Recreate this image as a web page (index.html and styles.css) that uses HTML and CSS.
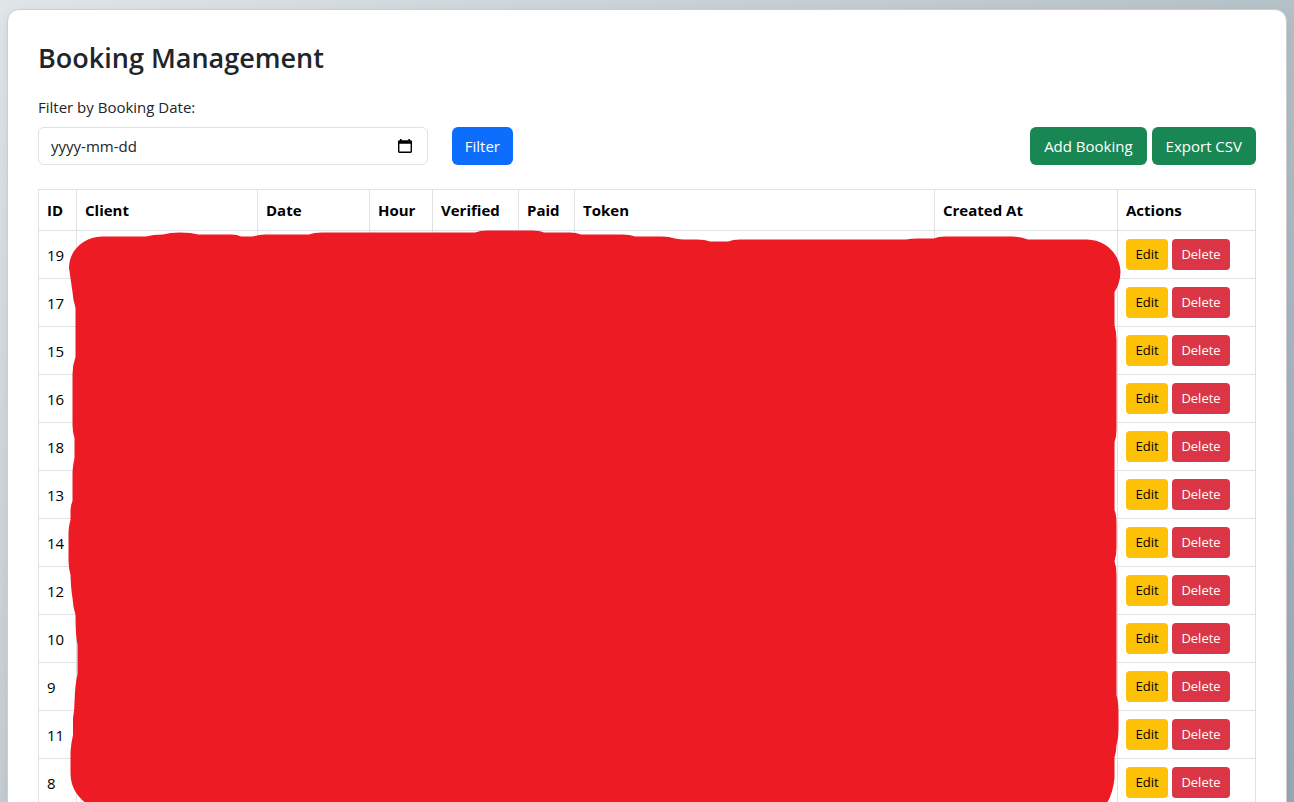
FILE: index.html
```html
<!DOCTYPE html>
<html lang="en">
<head>
<meta charset="utf-8">
<title>Booking Management</title>
<link rel="stylesheet" href="styles.css">
</head>
<body>
<main class="card">
  <h1 class="title">Booking Management</h1>
  <form class="toolbar">
    <div class="field">
      <label for="booking-date">Filter by Booking Date:</label>
      <div class="date-box">
        <input id="booking-date" class="date-input" type="text" placeholder="yyyy-mm-dd">
        <button class="date-picker" type="button" aria-label="Show date picker">
          <svg width="14" height="15" viewBox="0 0 14 15" aria-hidden="true"><path fill="#000" fill-rule="evenodd" d="M2 0h1.6v1.3h6.8V0H12v1.3h.6c.8 0 1.4.6 1.4 1.4v9.900c0 .8-.6 1.400-1.400 1.400H1.400C.6 14 0 13.400 0 12.600V2.700c0-.8.600-1.400 1.400-1.400H2zM1.400 4.700v7.900h11.200V4.700z"/></svg>
        </button>
      </div>
    </div>
    <button class="btn btn-primary" type="submit">Filter</button>
    <div class="toolbar-end">
      <a class="btn btn-success" href="#add">Add Booking</a>
      <a class="btn btn-success" href="#export">Export CSV</a>
    </div>
  </form>
  <div class="table-wrap">
    <table class="table">
      <colgroup><col class="c-id"><col class="c-client"><col class="c-date"><col class="c-hour"><col class="c-verified"><col class="c-paid"><col class="c-token"><col class="c-created"><col class="c-actions"></colgroup>
      <thead>
        <tr><th>ID</th><th>Client</th><th>Date</th><th>Hour</th><th>Verified</th><th>Paid</th><th>Token</th><th>Created At</th><th>Actions</th></tr>
      </thead>
      <tbody id="rows"></tbody>
    </table>
    <svg class="redaction" viewBox="38 189 1218 617" preserveAspectRatio="none" aria-hidden="true">
      <path fill="#ed1c24" d="M69 268C69 250 84 237 102 236.500H146Q153 234.500 163 234.500Q170 232.500 180 232.500Q191 232.500 198 234.500H232Q237 234.700 241 236.500H253Q258 234.500 265 234.500H309Q314 232.500 322 232.500H475Q480 230.500 487 230.500H532Q540 230.700 544 232.500H570Q576 232.700 581 234.500H622Q630 234.700 635 236.500H662Q669 236.700 675 238.500Q680 239.500 684 239.500H697Q705 239.700 710 241.500H728Q733 239.500 740 239.500H906Q911 238.500 918 238.500H934Q938 236.500 945 236.500H1012Q1021 236.700 1028 239.500H1087C1106 240 1120 254 1120.500 272Q1120 284 1114.500 292V325Q1116.500 332 1116.500 340V430Q1116.500 437 1114.500 442V510Q1116.500 515 1116.500 523V548Q1116.500 555 1114.500 561Q1116.500 567 1116.500 575V695Q1118.500 702 1118.500 712V730Q1118.500 738 1116.500 745Q1116 753 1114.500 757V778Q1113 793 1107 803L1103 806H90Q71 794 70.500 774V752Q71 743 73 735V718Q74.500 710 74.500 702Q75 685 77.500 674V645Q75.500 636 75.500 615Q73 607 72.500 598Q71 590 70.500 575Q68.500 568 68.500 560V535Q68.500 526 70.500 520V510Q71 504 72.500 501V472Q73 464 74.500 458V438Q72.500 432 72.500 425V374Q72.500 365 75.500 357V308Q73 300 72.500 292Z"/>
    </svg>
  </div>
</main>
<script src="bookings.js"></script>
</body>
</html>
```
FILE: bookings.js
```js
const ids = [19, 17, 15, 16, 18, 13, 14, 12, 10, 9, 11, 8];
document.getElementById("rows").innerHTML = ids.map(id => `
  <tr>
    <td>${id}</td><td></td><td></td><td></td><td></td><td></td><td></td><td></td>
    <td><div class="actions">
      <a class="btn btn-sm btn-warning" href="#edit-${id}">Edit</a>
      <button class="btn btn-sm btn-danger" type="button">Delete</button>
    </div></td>
  </tr>`).join("");
```
FILE: styles.css
```css
*, *::before, *::after { box-sizing: border-box; }
html { scrollbar-width: none; }
body {
  margin: 0;
  padding: 9px 7px;
  min-height: 100vh;
  font: 15px/24px "Open Sans", "Segoe UI", sans-serif;
  color: #212529;
  background: linear-gradient(135deg, #e0e5e8, #98a7b2);
}
.card {
  padding: 30px;
  background: #fff;
  border: 1px solid #c8ced2;
  border-radius: 12px;
  box-shadow: 0 4px 12px rgba(0, 0, 0, .08);
}
.title { margin: 0 0 20px; font-size: 27px; line-height: 35px; font-weight: 600; }
.toolbar { display: flex; align-items: flex-end; gap: 24px; margin-bottom: 24px; }
.field { flex: 0 0 32%; }
.field label { display: block; margin-bottom: 8px; }
.date-box { display: flex; align-items: center; border: 1px solid #dee2e6; border-radius: 6px; background: #fff; }
.date-input { flex: 1; min-width: 0; height: 36px; padding: 0 12px; border: 0; background: none; font: inherit; color: inherit; outline: 0; }
.date-input::placeholder { color: #212529; opacity: 1; }
.date-picker { display: flex; margin-right: 15px; padding: 0; border: 0; background: none; }
.toolbar-end { display: flex; gap: 5px; margin-left: auto; }
.btn {
  display: inline-block;
  padding: 6px 12px;
  border: 1px solid transparent;
  border-radius: 6px;
  font: inherit;
  text-align: center;
  text-decoration: none;
  white-space: nowrap;
  cursor: pointer;
}
.btn-primary { background: #0d6efd; color: #fff; }
.btn-success { padding: 6px 13px; background: #198754; color: #fff; }
.btn-sm { padding: 4px 8px; border-radius: 4px; font-size: 13px; line-height: 21px; }
.btn-warning { background: #ffc107; color: #000; }
.btn-danger { background: #dc3545; color: #fff; }
.table-wrap { position: relative; }
.table { width: 100%; table-layout: fixed; border-collapse: collapse; color: #000; }
.table th, .table td { padding: 8px; border: 1px solid #dee2e6; text-align: left; vertical-align: middle; }
.table th { font-weight: 700; }
.c-id { width: 38px; }
.c-client { width: 181px; }
.c-date { width: 112px; }
.c-hour { width: 63px; }
.c-verified { width: 86px; }
.c-paid { width: 56px; }
.c-created { width: 183px; }
.c-actions { width: 138px; }
.actions { display: grid; grid-template-columns: 42px 58px; gap: 4px; }
.redaction { position: absolute; top: 0; left: 0; width: 100%; height: 617px; pointer-events: none; }
```
